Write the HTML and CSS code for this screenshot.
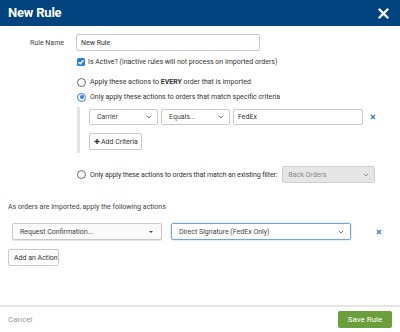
FILE: index.html
```html
<!DOCTYPE html>
<html lang="en">
<head>
    <meta charset="UTF-8">
    <meta name="viewport" content="width=device-width, initial-scale=1.0">
    <title>New Rule</title>
    <link rel="stylesheet" href="styles.css">
</head>
<body>
    <div class="modal">
        <div class="modal-header">
            <span class="modal-title">New Rule</span>
            <svg class="close" width="11" height="11" viewBox="0 0 11 11"><path d="M1.5 1.5 L9.5 9.5 M9.5 1.5 L1.5 9.5" stroke="#fff" stroke-width="2.4" stroke-linecap="round"/></svg>
        </div>
        <div class="modal-body">
            <div class="name-row">
                <label class="name-label">Rule Name</label>
                <div class="text-input name-input">New Rule</div>
            </div>
            <div class="options">
                <div class="check-row">
                    <span class="checkbox">
                        <svg width="8" height="8" viewBox="0 0 8 8"><path d="M1.5 4.2 L3.2 5.8 L6.5 2.3" stroke="#fff" stroke-width="1.4" fill="none"/></svg>
                    </span>
                    <span>Is Active? (inactive rules will not process on imported orders)</span>
                </div>
                <div class="radio-row first">
                    <span class="radio"></span>
                    <span>Apply these actions to <b>EVERY</b> order that is imported</span>
                </div>
                <div class="radio-row second">
                    <span class="radio checked"></span>
                    <span>Only apply these actions to orders that match specific criteria</span>
                </div>
                <div class="criteria">
                    <div class="criteria-row">
                        <div class="select sel-carrier">Carrier <svg class="chev" width="6" height="4" viewBox="0 0 6 4"><path d="M0.7 0.7 L3 3 L5.3 0.7" stroke="#666" stroke-width="0.9" fill="none"/></svg></div>
                        <div class="select sel-equals">Equals... <svg class="chev" width="6" height="4" viewBox="0 0 6 4"><path d="M0.7 0.7 L3 3 L5.3 0.7" stroke="#666" stroke-width="0.9" fill="none"/></svg></div>
                        <div class="text-input crit-value">FedEx</div>
                        <svg class="remove" width="6" height="6" viewBox="0 0 6 6"><path d="M1 1 L5 5 M5 1 L1 5" stroke="#3f86c9" stroke-width="1.5"/></svg>
                    </div>
                    <div class="btn add-criteria"><span class="plus">&#10010;</span>Add Criteria</div>
                </div>
                <div class="radio-row filter-row">
                    <span class="radio"></span>
                    <span class="filter-text">Only apply these actions to orders that match an existing filter:</span>
                    <div class="select disabled sel-filter">Back Orders <svg class="chev" width="6" height="4" viewBox="0 0 6 4"><path d="M0.7 0.7 L3 3 L5.3 0.7" stroke="#888" stroke-width="0.9" fill="none"/></svg></div>
                </div>
            </div>
            <div class="actions-title">As orders are imported, apply the following actions</div>
            <div class="action-row">
                <div class="select sel-action">Request Confirmation... <span class="caret"></span></div>
                <div class="select focused sel-option">Direct Signature (FedEx Only) <svg class="chev" width="6" height="4" viewBox="0 0 6 4"><path d="M0.7 0.7 L3 3 L5.3 0.7" stroke="#666" stroke-width="0.9" fill="none"/></svg></div>
                <svg class="remove action-remove" width="6" height="6" viewBox="0 0 6 6"><path d="M1 1 L5 5 M5 1 L1 5" stroke="#3f86c9" stroke-width="1.5"/></svg>
            </div>
            <div class="btn add-action">Add an Action</div>
        </div>
        <div class="modal-footer">
            <span class="cancel">Cancel</span>
            <div class="save">Save Rule</div>
        </div>
    </div>
</body>
</html>
```

FILE: styles.css
```css
body {
    margin: 0;
    font-family: Roboto, 'Liberation Sans', sans-serif;
    font-size: 7px;
    line-height: 8px;
    color: #333;
    background-color: #fff;
    white-space: nowrap;
}
.modal {
    width: 400px;
    height: 332px;
    display: flex;
    flex-direction: column;
    overflow: hidden;
}
.modal-header {
    height: 26px;
    flex-shrink: 0;
    background-color: #00437f;
    color: #fff;
    display: flex;
    justify-content: space-between;
    align-items: center;
    padding: 0 11px 0 8px;
}
.modal-title {
    font-size: 13px;
    line-height: 16px;
    font-weight: bold;
    letter-spacing: -0.2px;
}
.modal-body {
    flex: 1;
    padding: 8px 0 0 0;
}
.name-row {
    display: flex;
    align-items: center;
}
.name-label {
    width: 64px;
    text-align: right;
    margin-right: 12px;
    color: #444;
}
.text-input {
    box-sizing: border-box;
    height: 17px;
    border: 1px solid #c8c8c8;
    border-radius: 2px;
    padding: 0 4px;
    display: flex;
    align-items: center;
    color: #333;
}
.name-input {
    width: 184px;
}
.options {
    margin-left: 77px;
}
.check-row, .radio-row {
    display: flex;
    align-items: center;
    gap: 3px;
    height: 9px;
}
.check-row {
    margin-top: 6.5px;
}
.checkbox {
    width: 8px;
    height: 8px;
    border-radius: 1.5px;
    background-color: #2f7fd6;
    display: flex;
    align-items: center;
    justify-content: center;
}
.radio-row.first {
    margin-top: 11px;
}
.radio-row.second {
    margin-top: 6px;
}
.radio {
    box-sizing: border-box;
    width: 9px;
    height: 9px;
    border: 1px solid #666;
    border-radius: 50%;
    margin-right: 1px;
    position: relative;
    flex-shrink: 0;
}
.radio.checked {
    border-color: #2f7fd6;
}
.radio.checked::after {
    content: '';
    position: absolute;
    left: 1.5px;
    top: 1.5px;
    width: 4px;
    height: 4px;
    border-radius: 50%;
    background-color: #2f7fd6;
}
.criteria {
    margin-top: 5.5px;
    border-left: 3px solid #e4e4e4;
    padding: 2px 0 3px 9px;
}
.criteria-row {
    display: flex;
    align-items: center;
    gap: 3px;
}
.select {
    box-sizing: border-box;
    height: 16px;
    border: 1px solid #c8c8c8;
    border-radius: 2px;
    padding: 0 5px 0 7px;
    display: flex;
    align-items: center;
    justify-content: space-between;
    color: #444;
}
.sel-carrier {
    width: 69px;
}
.sel-equals {
    width: 69px;
}
.crit-value {
    width: 130px;
    height: 16px;
}
.remove {
    margin-left: 4px;
}
.btn {
    box-sizing: border-box;
    display: flex;
    align-items: center;
    height: 17px;
    border: 1px solid #c8c8c8;
    border-radius: 2px;
    padding: 0 4px;
    color: #333;
}
.add-criteria {
    margin-top: 8px;
    width: 53px;
    gap: 1px;
}
.plus {
    font-size: 7px;
    color: #333;
}
.radio-row.filter-row {
    margin-top: 13px;
    height: 17px;
    gap: 3px;
}
.filter-text {
    letter-spacing: -0.1px;
    margin-right: 2px;
}
.sel-filter {
    width: 93px;
    height: 17px;
    padding-left: 5px;
}
.select.disabled {
    background-color: #e6e6e6;
    border-color: #cfcfcf;
    color: #888;
}
.actions-title {
    margin: 20px 0 0 8px;
    color: #444;
}
.action-row {
    display: flex;
    align-items: center;
    margin: 12px 0 0 12px;
}
.sel-action {
    width: 150px;
    height: 17px;
    background-color: #fafafa;
    box-shadow: 0 1px 1px rgba(0, 0, 0, 0.12);
    padding: 0 8px 0 7px;
}
.caret {
    width: 0;
    height: 0;
    border-left: 2px solid transparent;
    border-right: 2px solid transparent;
    border-top: 2.5px solid #444;
}
.sel-option {
    margin-left: 9px;
    width: 180px;
    height: 17px;
    padding-right: 6px;
}
.select.focused {
    border-color: #6ea8e0;
    box-shadow: 0 0 2px rgba(70, 140, 220, 0.5);
}
.action-remove {
    margin-left: 25px;
}
.add-action {
    margin: 9px 0 0 8px;
    width: 51px;
    padding-left: 5px;
}
.modal-footer {
    border-top: 2px solid #e6e6e6;
    height: 25px;
    flex-shrink: 0;
    display: flex;
    justify-content: space-between;
    align-items: center;
    padding: 0 8px 0 8px;
}
.cancel {
    color: #999;
    font-size: 8px;
}
.save {
    box-sizing: border-box;
    width: 54px;
    height: 17px;
    background-color: #6a9f3c;
    color: #fff;
    border-radius: 2px;
    display: flex;
    align-items: center;
    justify-content: center;
    font-size: 8px;
}
```
